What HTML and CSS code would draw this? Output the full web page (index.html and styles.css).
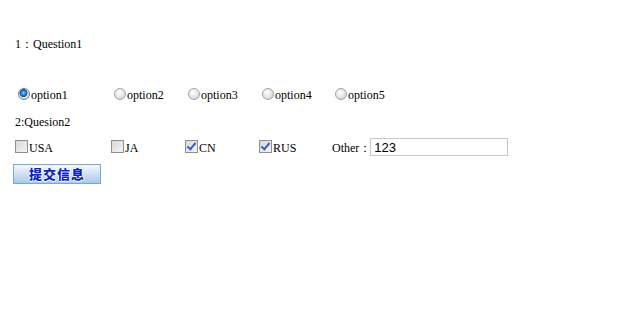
FILE: index.html
```html
<!DOCTYPE html>
<html lang="zh">
<head>
  <meta charset="UTF-8" />
  <title>Question</title>
  <link rel="stylesheet" href="styles.css">
</head>
<body>
  <form class="survey">
    <div class="title">1：Question1</div>

    <div class="row radios">
      <label class="opt"><input type="radio" name="q1" checked>option1</label>
      <label class="opt"><input type="radio" name="q1">option2</label>
      <label class="opt"><input type="radio" name="q1">option3</label>
      <label class="opt"><input type="radio" name="q1">option4</label>
      <label class="opt"><input type="radio" name="q1">option5</label>
    </div>

    <div class="title title2">2:Quesion2</div>

    <div class="row checks">
      <label class="opt"><input type="checkbox">USA</label>
      <label class="opt"><input type="checkbox">JA</label>
      <label class="opt"><input type="checkbox" checked>CN</label>
      <label class="opt"><input type="checkbox" checked>RUS</label>
      <label class="opt other">Other：<input type="text" class="other-input" value="123"></label>
    </div>

    <button type="button" class="submit-btn">提交信息</button>
  </form>
</body>
</html>
```

FILE: styles.css
```css
body {
  margin: 0;
  padding: 0 0 0 15px;
  font-family: "Liberation Serif", "Times New Roman", serif;
  font-size: 12px;
  color: #000;
  background: #fff;
}

.title {
  margin-top: 37px;
  line-height: 15px;
}

.title2 {
  margin-top: 15px;
}

.row {
  display: grid;
  grid-template-columns: 96px 74px 74px 73px auto;
  align-items: center;
}

.radios {
  margin-top: 32px;
  height: 16px;
}

.checks {
  margin-top: 8px;
  height: 20px;
}

.opt {
  display: flex;
  align-items: center;
  white-space: nowrap;
}

.radios .opt {
  padding-top: 4px;
}

input[type="radio"] {
  appearance: none;
  -webkit-appearance: none;
  width: 12px;
  height: 12px;
  margin: 0 1px 0 3px;
  border-radius: 50%;
  border: 1px solid #a3a3a3;
  background: radial-gradient(circle at 40% 35%, #ffffff 0%, #e4e4e4 55%, #c8c8c8 100%);
  box-sizing: border-box;
  position: relative;
  top: -2px;
}

input[type="radio"]:checked {
  border-color: #6f7f95;
  background: radial-gradient(circle at 45% 40%, #9fd3ff 0%, #1f77c8 30%, #0a4f9a 45%, #dfe3e8 52%, #c9ccd0 100%);
}

input[type="checkbox"] {
  appearance: none;
  -webkit-appearance: none;
  width: 13px;
  height: 13px;
  margin: 0 1px 0 0;
  border: 1px solid #8f8f8f;
  background: linear-gradient(135deg, #d8d8d8, #f4f4f4);
  box-sizing: border-box;
  position: relative;
  top: -2px;
}

input[type="checkbox"]:checked::after {
  content: "";
  position: absolute;
  left: 3px;
  top: 0;
  width: 3px;
  height: 7px;
  border: solid #3a5fc4;
  border-width: 0 2px 2px 0;
  transform: rotate(40deg);
}

.other-input {
  width: 138px;
  height: 18px;
  box-sizing: border-box;
  margin-left: -1px;
  padding: 0 3px;
  border: 1px solid #c8c8c8;
  font-family: "Liberation Sans", Arial, sans-serif;
  font-size: 13px;
  color: #000;
  outline: none;
  position: relative;
  top: -1px;
}

.submit-btn {
  display: block;
  margin: 6px 0 0 -2px;
  width: 88px;
  height: 20px;
  padding: 0;
  border: 1px solid #7aa7d2;
  background: linear-gradient(#f4f8fd, #d3e3f6 45%, #a9c8ec);
  color: #0a1fc8;
  font-family: "Noto Sans CJK SC", sans-serif;
  font-size: 13px;
  font-weight: 900;
  letter-spacing: 1px;
  line-height: 18px;
  text-shadow: 1px 0 0 #fff, -1px 0 0 #fff, 0 1px 0 #fff, 0 -1px 0 #fff;
  cursor: pointer;
}
```
